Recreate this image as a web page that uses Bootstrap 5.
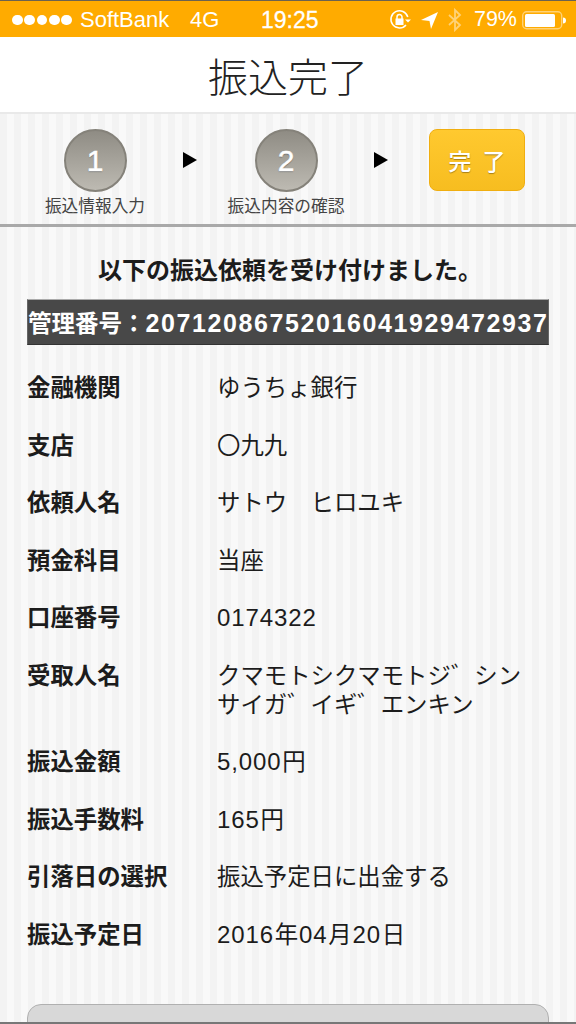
<!DOCTYPE html>
<html lang="ja">
<head>
<meta charset="utf-8">
<title>振込完了</title>
<link href="https://cdn.jsdelivr.net/npm/bootstrap@5.3.0/dist/css/bootstrap.min.css" rel="stylesheet">
<style>
html,body{height:1024px;overflow:hidden}
body{font-family:"Liberation Sans","Noto Sans CJK JP",sans-serif;color:#1c1c1c;background:repeating-linear-gradient(90deg,#f3f3f3 0 7px,#f9f9f9 7px 14px);position:relative}
.sbar{height:37px;background:#ffab00;border-top:1px solid #6b6250;color:#fff;padding:2px 10px 0 12px;white-space:nowrap;line-height:1}
.dots{display:flex;gap:1.500px;margin-right:8px}
.dots i{display:block;width:10.800px;height:10.800px;border-radius:50%;background:#fff}
.carrier{width:110px;font-size:22px}
.net{width:71px;font-size:22px}
.clock{font-size:23px;font-weight:400;-webkit-text-stroke:.3px #fff}
.sright{margin-left:auto;gap:10px}
.pct{font-size:21.500px;margin-left:2px;margin-right:-5px}
.titlebar{height:77px;background:#fff;border-bottom:2px solid #e9e9e9;font-size:40px;font-family:"Noto Sans CJK JP",sans-serif;font-weight:300;line-height:76px;text-align:center;color:#222}
.steps{height:113px;border-bottom:3px solid #a9a9a9;padding:15px 0 0 25px}
.stepcol{width:140px;text-align:center;font-family:"Noto Sans CJK JP",sans-serif;font-size:16.700px;color:#444;line-height:1;white-space:nowrap}
.circle{width:63px;height:63px;border-radius:50%;background:linear-gradient(#8f8c84,#bdbab2);border:2px solid #85827a;color:#fff;font:400 30px/59px "Liberation Sans",sans-serif;margin:0 auto 5px;text-shadow:0 1px 1px #666;-webkit-text-stroke:.5px #fff}
.arrow{width:0;height:0;border-left:14px solid #000;border-top:8px solid transparent;border-bottom:8px solid transparent;margin:23px 19px 0 18px}
.donebox{width:96px;height:62px;margin-left:22px;border-radius:8px;background:linear-gradient(#ffc92f,#f7bd20);border:1px solid #f0ae10;color:#fff;font-family:"Noto Sans CJK JP",sans-serif;font-weight:500;font-size:23px;line-height:60px;text-align:center;word-spacing:6px;text-shadow:0 1px 1px #a8801a}
.lead-msg{font-size:24px;font-weight:700;font-family:"Noto Sans CJK JP",sans-serif;text-align:center;line-height:30px;margin-top:27px;padding-left:4px;color:#1c1c1c}
.numbar{margin:15px 27px 0;height:46px;background:#484848;border:1px solid #aaa;border-left-color:#666;border-right-color:#666;border-bottom-color:#333;color:#fff;font-family:"Noto Sans CJK JP",sans-serif;font-weight:700;font-size:23.500px;line-height:44px;white-space:nowrap;overflow:hidden;text-align:left}
.numbar b{font-family:"Liberation Sans",sans-serif;font-size:25px;letter-spacing:1.600px;line-height:1}
.inforows{margin:27px 27px 0;font-size:23.400px;line-height:29px;font-family:"Noto Sans CJK JP",sans-serif}
.inforow{margin-bottom:28.500px}
.inforow dt{width:190px;flex:none;font-weight:700;font-size:23.400px;margin:0}
.inforow dd{margin:0;width:320px;white-space:nowrap}
.digits{font-family:"Liberation Sans",sans-serif;font-size:24px;letter-spacing:.9px;line-height:1}
.unit{margin:0 .8px}
.backbtn{position:absolute;left:27px;top:1004px;width:522px;height:40px;border:1px solid #b0b0b0;border-radius:14px 14px 0 0;background:#d8d8d8}
.botline{position:absolute;left:0;right:0;top:1022px;height:2px;background:#777}
</style>
</head>
<body>
<div class="sbar d-flex align-items-center">
  <div class="dots"><i></i><i></i><i></i><i></i><i></i></div>
  <span class="carrier">SoftBank</span><span class="net">4G</span>
  <span class="clock">19:25</span>
  <div class="sright d-flex align-items-center">
    <svg width="22" height="22" viewBox="0 0 22 22" fill="none" stroke="#fff" stroke-width="1.500"><path d="M17 16A8.600 8.600 0 1 1 18.800 8"/><path d="M16 10.500h6l-3 3z" fill="#fff" stroke="none"/><rect x="6.500" y="9.500" width="8" height="6.500" fill="#fff" stroke="none"/><path d="M8 10V8a2.500 2.500 0 0 1 5 0v2"/></svg>
    <svg width="17" height="18" viewBox="0 0 17 18" fill="#fff"><path d="M0 9 17 1 10 18 8.500 10z"/></svg>
    <svg width="14" height="24" viewBox="0 0 14 24" fill="none" stroke="#ffd277" stroke-width="1.800"><path d="M1 7 12 17 7 22V2l5 5L1 17"/></svg>
    <span class="pct">79%</span>
    <svg width="44" height="19" viewBox="0 0 44 19" fill="none"><rect x=".7" y=".7" width="39" height="17" rx="4" stroke="#ffd277" stroke-width="1.400"/><rect x="3" y="3" width="30" height="13" rx="1.500" fill="#fff"/><path d="M41 6.500c2 0 3 1 3 3s-1 3-3 3z" fill="#fff"/></svg>
  </div>
</div>
<h1 class="titlebar m-0">振込完了</h1>
<div class="steps d-flex">
  <div class="stepcol"><div class="circle">1</div>振込情報入力</div>
  <div class="arrow"></div>
  <div class="stepcol"><div class="circle">2</div>振込内容の確認</div>
  <div class="arrow"></div>
  <div class="donebox">完 了</div>
</div>
<p class="lead-msg mb-0">以下の振込依頼を受け付けました。</p>
<div class="numbar">管理番号：<b>20712086752016041929472937</b></div>
<dl class="inforows mb-0">
  <div class="inforow d-flex"><dt>金融機関</dt><dd>ゆうちょ銀行</dd></div>
  <div class="inforow d-flex"><dt>支店</dt><dd>〇九九</dd></div>
  <div class="inforow d-flex"><dt>依頼人名</dt><dd>サトウ　ヒロユキ</dd></div>
  <div class="inforow d-flex"><dt>預金科目</dt><dd>当座</dd></div>
  <div class="inforow d-flex"><dt>口座番号</dt><dd><span class="digits">0174322</span></dd></div>
  <div class="inforow d-flex"><dt>受取人名</dt><dd>クマモトシクマモトジ゛シン<br>サイガ゛イギ゛エンキン</dd></div>
  <div class="inforow d-flex"><dt>振込金額</dt><dd><span class="digits">5,000</span><span class="unit">円</span></dd></div>
  <div class="inforow d-flex"><dt>振込手数料</dt><dd><span class="digits">165</span><span class="unit">円</span></dd></div>
  <div class="inforow d-flex"><dt>引落日の選択</dt><dd>振込予定日に出金する</dd></div>
  <div class="inforow d-flex"><dt>振込予定日</dt><dd><span class="digits">2016</span><span class="unit">年</span><span class="digits">04</span><span class="unit">月</span><span class="digits">20</span><span class="unit">日</span></dd></div>
</dl>
<div class="backbtn"></div>
<div class="botline"></div>
<script src="https://cdn.jsdelivr.net/npm/bootstrap@5.3.0/dist/js/bootstrap.bundle.min.js"></script>
</body>
</html>
